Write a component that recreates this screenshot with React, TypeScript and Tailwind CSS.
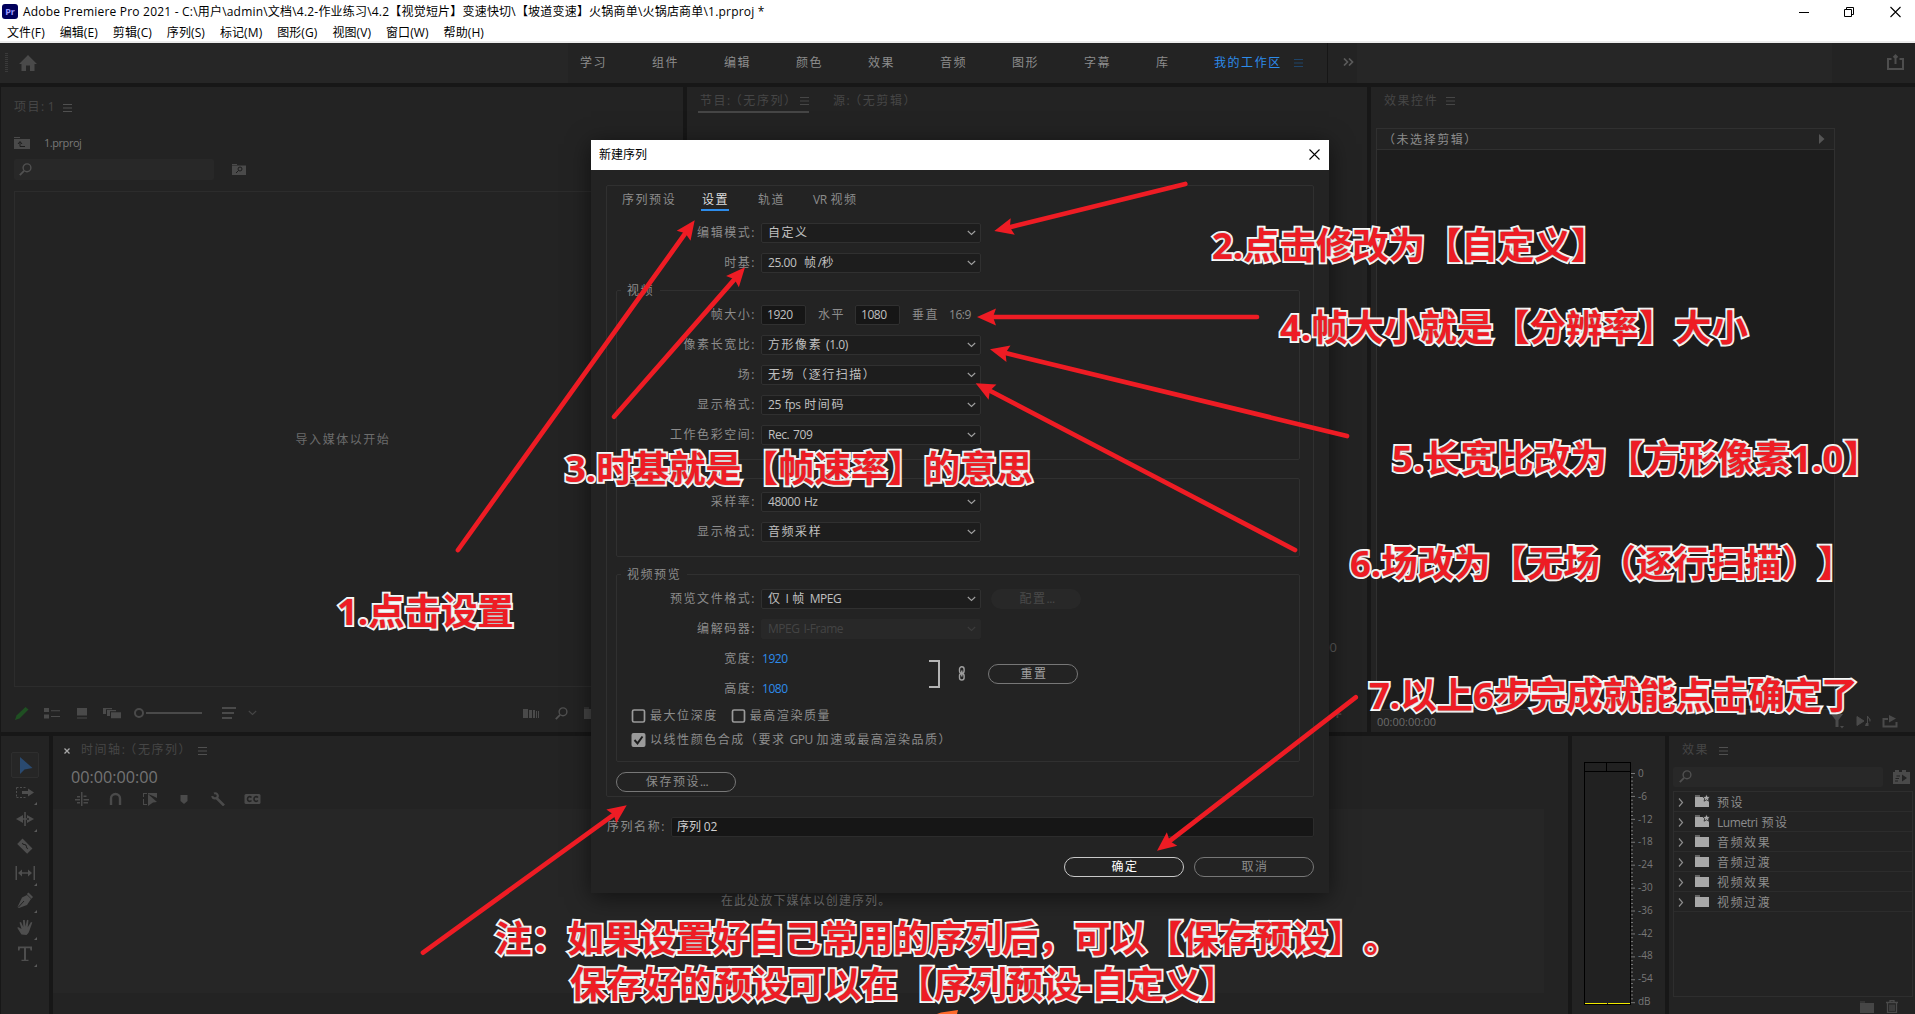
import type { ReactNode } from 'react';
import clsx from 'clsx';

const WORKSPACES = ['学习', '组件', '编辑', '颜色', '效果', '音频', '图形', '字幕', '库'];
const MENUS = ['文件(F)', '编辑(E)', '剪辑(C)', '序列(S)', '标记(M)', '图形(G)', '视图(V)', '窗口(W)', '帮助(H)'];
const DB_LABELS = ['0', '-6', '-12', '-18', '-24', '-30', '-36', '-42', '-48', '-54', 'dB'];
const EFFECTS = [
  { name: '预设', star: true },
  { name: 'Lumetri 预设', star: true },
  { name: '音频效果', star: false },
  { name: '音频过渡', star: false },
  { name: '视频效果', star: false },
  { name: '视频过渡', star: false },
];

// tail -> tip of every red arrow
const ARROWS = [
  [458, 550, 694.7, 220.3],
  [1185.3, 184, 994.3, 231],
  [614, 416.7, 745, 267.3],
  [1257, 317, 977, 317],
  [1347, 436, 990, 349.3],
  [1295, 550, 975.7, 383.3],
  [1355.7, 697.3, 1157, 850.7],
  [423, 952.7, 626.7, 805.3],
];

// Latin runs are set tighter than the spaced Chinese glyphs
function T({ children, className }: { children: string; className?: string }) {
  const runs = children.split(/([\x20-\x7e]+)/).filter(Boolean);
  return (
    <span className={clsx('whitespace-pre', className)}>
      {runs.map((r, i) =>
        /^[\x20-\x7e]/.test(r) ? (
          <span key={i} className="tracking-[-0.45px] [word-spacing:1.2px]">{r}</span>
        ) : (
          <span key={i} className="tracking-[1.55px]">{r}</span>
        )
      )}
    </span>
  );
}

function Burger({ className }: { className?: string }) {
  return (
    <svg width="9" height="8" viewBox="0 0 9 8" className={className}>
      <path d="M0 .5h9M0 4h9M0 7.5h9" stroke="currentColor" fill="none" />
    </svg>
  );
}

function Search({ className }: { className?: string }) {
  return (
    <svg width="13" height="13" viewBox="0 0 13 13" className={className} fill="none" stroke="currentColor" strokeWidth="1.4">
      <circle cx="8" cy="4.8" r="3.9" />
      <path d="M5 7.8L.8 12.2" strokeWidth="1.8" />
    </svg>
  );
}

function Chevron({ className }: { className?: string }) {
  return (
    <svg width="9" height="6" viewBox="0 0 9 6" className={className} fill="none" stroke="currentColor" strokeWidth="1.1">
      <path d="M.8 1l3.700 3.400L8.200 1" />
    </svg>
  );
}

function Folder({ star, className }: { star?: boolean; className?: string }) {
  return (
    <svg width="16" height="14" viewBox="0 0 16 14" className={className} fill="currentColor">
      <path d="M0 1.500h5v1H0zM0 3h14V13H0z" />
      {star && (
        <path d="M11.500 0l1.100 2.500 2.700.2-2 1.800.6 2.700-2.400-1.400-2.400 1.400.6-2.700-2-1.800 2.700-.2z" stroke="#232323" strokeWidth=".8" />
      )}
    </svg>
  );
}

function Select({ value, disabled }: { value: string; disabled?: boolean }) {
  return (
    <div
      className={clsx(
        'flex h-[20px] w-[220px] items-center justify-between rounded-[2px] border pl-[6px] pr-[4px]',
        disabled ? 'border-[#282828] bg-[#282828] text-[#444444]' : 'border-[#303030] bg-[#1d1d1d] text-[#c0c0c0]'
      )}
    >
      <T>{value}</T>
      <Chevron className={disabled ? 'text-[#3c3c3c]' : 'text-[#a0a0a0]'} />
    </div>
  );
}

function Row({ label, wide, children }: { label: string; wide?: boolean; children: ReactNode }) {
  return (
    <div className="flex h-[20px] items-center">
      <div className={clsx('mr-[7px] flex shrink-0 justify-end', wide ? 'w-[147px]' : 'w-[137px]')}>
        <T>{label}</T>
      </div>
      {children}
    </div>
  );
}

function Group({ title, className, children }: { title: string; className: string; children: ReactNode }) {
  return (
    <div className={clsx('relative ml-[9px] w-[684px] rounded-[2px] border border-[#303030]', className)}>
      <div className="absolute -top-[9px] left-[4px] bg-[#232323] px-[6px] leading-[18px]">
        <T>{title}</T>
      </div>
      {children}
    </div>
  );
}

function NumBox({ value }: { value: string }) {
  return (
    <div className="flex h-[20px] w-[45px] items-center rounded-[2px] border border-[#303030] bg-[#161616] pl-[5px] text-[#c0c0c0]">
      <T>{value}</T>
    </div>
  );
}

function Pill({ label, className }: { label: string; className: string }) {
  return (
    <div className={clsx('flex h-[20px] items-center justify-center rounded-full pl-[2px]', className)}>
      <T>{label}</T>
    </div>
  );
}

function Check({ label, on }: { label: string; on?: boolean }) {
  return (
    <div className="flex h-[14px] items-center gap-[4px]">
      <svg width="15" height="14" viewBox="0 0 15 14" fill="none">
        {on ? (
          <>
            <rect x=".5" width="14" height="14" rx="2" fill="#9a9a9a" />
            <path d="M3.500 7l3 3.300L11.500 3.500" stroke="#1d1d1d" strokeWidth="2" />
          </>
        ) : (
          <rect x="1.500" y="1" width="12" height="12" rx="1.500" stroke="#9a9a9a" strokeWidth="1.700" />
        )}
      </svg>
      <T>{label}</T>
    </div>
  );
}

function Dialog() {
  return (
    <div className="absolute left-[591px] top-[140px] h-[753px] w-[738px] bg-[#232323] text-[#8c8c8c] shadow-[0_4px_22px_rgba(0,0,0,0.55)]">
      <div className="flex h-[30px] items-center justify-between bg-white pl-[8px] pr-[9px] text-black">
        <span>新建序列</span>
        <svg width="11" height="11" viewBox="0 0 11 11" className="mb-[2px]" stroke="#000" strokeWidth="1.1">
          <path d="M.5.5l10 10M10.500.5l-10 10" />
        </svg>
      </div>

      <div className="ml-[15px] mt-[15px] h-[612px] w-[708px] rounded-[2px] border border-[#303030]">
        <div className="flex h-[37px] pl-[15px] leading-[26px]">
          <T className="w-[79px] pt-px">序列预设</T>
          <div className="mr-[29px] flex h-[25px] w-[28px] justify-center border-b-2 border-[#2d8ceb] pl-px text-[#dcdcdc]">
            <T className="pt-px">设置</T>
          </div>
          <T className="w-[55px] pt-px">轨道</T>
          <T className="pt-px">VR 视频</T>
        </div>
        <div className="flex flex-col gap-[10px]">
          <Row wide label="编辑模式:"><Select value="自定义" /></Row>
          <Row wide label="时基:"><Select value="25.00  帧/秒" /></Row>
        </div>

        <Group title="视频" className="mt-[17px] flex h-[170px] flex-col gap-[10px] pt-[14px]">
          <Row label="帧大小:">
            <NumBox value="1920" />
            <T className="ml-[12px] w-[37px]">水平</T>
            <NumBox value="1080" />
            <T className="ml-[12px] w-[37px]">垂直</T>
            <T>16:9</T>
          </Row>
          <Row label="像素长宽比:"><Select value="方形像素 (1.0)" /></Row>
          <Row label="场:"><Select value="无场（逐行扫描）" /></Row>
          <Row label="显示格式:"><Select value="25 fps 时间码" /></Row>
          <Row label="工作色彩空间:"><Select value="Rec. 709" /></Row>
        </Group>

        <Group title="音频" className="mt-[18px] flex h-[79px] flex-col gap-[10px] pt-[13px]">
          <Row label="采样率:"><Select value="48000 Hz" /></Row>
          <Row label="显示格式:"><Select value="音频采样" /></Row>
        </Group>

        <Group title="视频预览" className="mt-[17px] h-[188px] pt-[14px]">
          <div className="flex flex-col gap-[10px]">
            <Row label="预览文件格式:">
              <Select value="仅 I 帧 MPEG" />
              <Pill label="配置..." className="ml-[10px] w-[90px] bg-[#282828] text-[#4a4a4a]" />
            </Row>
            <Row label="编解码器:"><Select disabled value="MPEG I-Frame" /></Row>
          </div>
          <div className="mt-[10px] flex items-center">
            <div className="flex w-[312px] flex-col gap-[10px]">
              <Row label="宽度:"><T className="pl-px text-[#2d8ceb]">1920</T></Row>
              <Row label="高度:"><T className="pl-px text-[#2d8ceb]">1080</T></Row>
            </div>
            <svg width="11" height="28" viewBox="0 0 11 28" fill="none" stroke="#b4b4b4" strokeWidth="2">
              <path d="M0 1h10v26H0" />
            </svg>
            <svg width="8" height="15" viewBox="0 0 8 15" className="mb-[2px] ml-[18px]" fill="none" stroke="#a0a0a0" strokeWidth="1.4">
              <rect x="1.500" y=".8" width="4.600" height="6.500" rx="2.300" />
              <rect x="1.500" y="7.500" width="4.600" height="6.500" rx="2.300" />
              <path d="M3.800 4.500v6" />
            </svg>
            <Pill label="重置" className="ml-[22px] w-[90px] border border-[#777777] text-[#a0a0a0]" />
          </div>
          <div className="mt-[10px] flex gap-[13px] pl-[14px]">
            <Check label="最大位深度" />
            <Check label="最高渲染质量" />
          </div>
          <div className="mt-[10px] pl-[14px]">
            <Check on label="以线性颜色合成（要求 GPU 加速或最高渲染品质）" />
          </div>
        </Group>
        <Pill label="保存预设..." className="ml-[9px] mt-[10px] w-[120px] border border-[#777777]" />
      </div>

      <div className="ml-[15px] mt-[20px] flex h-[20px] items-center">
        <T className="w-[65px] pl-px">序列名称:</T>
        <div className="flex h-[20px] w-[643px] items-center rounded-[2px] border border-[#2c2c2c] bg-[#161616] pl-[5px] text-[#d0d0d0]">
          <span className="tracking-[-0.1px]">序列 02</span>
        </div>
      </div>
      <div className="mr-[15px] mt-[20px] flex justify-end gap-[10px]">
        <Pill label="确定" className="w-[120px] border-[1.5px] border-[#c8c8c8] text-white" />
        <Pill label="取消" className="w-[120px] border border-[#777777]" />
      </div>
    </div>
  );
}

const TOOLS: ReactNode[] = [
  <path d="M7 4v17l4.500-4.500L19.500 15z" fill="#2a4a70" />,
  <>
    <path d="M3.500 7.500h10M3.500 17.500h10M3.500 7.500v10" stroke="currentColor" strokeDasharray="2 1.500" fill="none" />
    <path d="M9 11h6V8.500l6 4-6 4V14H9z" />
  </>,
  <path d="M11.200 5h1.600v14h-1.600zM10 8v8l-7-4zM14 8v8l7-4zM8 11.200h8v1.600H8z" />,
  <g transform="rotate(45 12 12)">
    <path d="M5 8.500h14v7.500H5z" />
    <path d="M8 12h2l1-1h2l1 1h2" stroke="#232323" fill="none" />
  </g>,
  <path d="M2.500 5H4v14H2.500zM20.500 5H22v14h-1.500zM5 12l4-3.500v2.700h6V8.500l4 3.500-4 3.500v-2.700H9v2.700z" />,
  <>
    <path d="M14 7l4 4-4 6-8 3-1.500-1L9 9.500z" />
    <path d="M15.500 4.500L20 9l-1.500 1.800-4.700-4.700z" />
    <path d="M5.500 19l5.500-6" stroke="#232323" />
  </>,
  <path d="M8.500 19.500C7 17 5 14.500 4.200 12.500l1.500-.3L8.500 14 6.500 7.500 8 7l2.300 5L10 5h1.800l.7 6.500L14 4.800l1.500.4-.8 7L18 7l1.300.6-2.500 7c-.6 2-1.300 4-3.300 5.400z" />,
  <path d="M5 4.500h14v4h-1.500L17 6.300h-4v11.400h2.500V19h-7v-1.300H11V6.300H7L6.500 8.500H5z" />,
];

function Toolbox() {
  return (
    <div className="flex w-[48px] flex-col bg-[#232323] pt-[16px] text-[#4e4e4e]">
      {TOOLS.map((t, i) => (
        <div key={i} className="relative flex h-[27px] justify-center">
          <div className={clsx('flex h-[26px] w-[28px] items-center justify-center', i === 0 && 'rounded-[2px] border border-[#2e2e2e] bg-[#262626]')}>
            <svg width="24" height="24" viewBox="0 0 24 24" fill="currentColor" className="shrink-0">{t}</svg>
          </div>
          {i !== 0 && i !== 3 && (
            <svg width="3" height="3" viewBox="0 0 3 3" className="absolute bottom-[1px] right-[12px]">
              <path d="M3 0v3H0z" fill="#5a5a5a" />
            </svg>
          )}
        </div>
      ))}
    </div>
  );
}

function ProjectPanel() {
  return (
    <div className="flex w-[682px] flex-col bg-[#232323] pl-[13px] text-[#464646]">
      <div className="mt-[10px] flex h-[20px] items-center">
        <T className="w-[49px]">项目: 1</T>
        <Burger className="mt-[2px] text-[#505050]" />
      </div>
      <div className="mt-[16px] flex h-[20px] items-center">
        <svg width="16" height="12" viewBox="0 0 16 12">
          <path d="M0 0h6v1H0zM0 2h16v10H0z" fill="#4a4a4a" />
          <path d="M6 9.500h5M6 9.500V5M4 7l2-2.500L8 7" stroke="#1d1d1d" fill="none" />
        </svg>
        <span className="ml-[14px] text-[11px] tracking-[-0.450px] text-[#787878]">1.prproj</span>
      </div>
      <div className="mt-[6px] flex h-[21px] items-center">
        <div className="flex h-full w-[200px] items-center rounded-[2px] bg-[#282828] pl-[5px]">
          <Search className="text-[#505050]" />
        </div>
        <svg width="14" height="11" viewBox="0 0 14 11" className="ml-[18px]">
          <path d="M0 0h5v1H0zM0 1.500h14V11H0z" fill="#4a4a4a" />
          <circle cx="8" cy="5" r="2" stroke="#1d1d1d" fill="none" />
          <path d="M6.500 6.500L4 9" stroke="#1d1d1d" />
        </svg>
      </div>
      <div className="mt-[11px] flex h-[496px] w-[658px] items-center justify-center border border-[#2c2c2c] pt-[1px] text-[#6c6c6c]">
        <T>导入媒体以开始</T>
      </div>
      <div className="mt-[12px] flex h-[28px] items-center">
        <svg width="14" height="14" viewBox="0 0 14 14" className="ml-[1px]" fill="#1f4f22">
          <path d="M0 14l1.500-4.500L10.500 1 13.500 3.500 4.500 12.500zM1 13" />
        </svg>
        <svg width="17" height="11" viewBox="0 0 17 11" className="ml-[15px]" fill="#4a4a4a">
          <path d="M0 0h5v4H0zM0 6.500h5v4H0zM7 2.200h9v1H7zM7 8h9v1H7z" />
        </svg>
        <svg width="10" height="11" viewBox="0 0 10 11" className="ml-[16px]" fill="#4a4a4a">
          <path d="M0 0h10v7.500H0zM0 9.500h10v1H0z" />
        </svg>
        <svg width="18" height="11" viewBox="0 0 18 11" className="ml-[16px]" fill="#4a4a4a">
          <path d="M0 0h9v1.200H3v4.800H0zM4 2h9v1.200H7V8H4zM8 4.300h10v6H8z" />
        </svg>
        <svg width="69" height="10" viewBox="0 0 69 10" className="ml-[13px]" fill="none" stroke="#4a4a4a">
          <circle cx="5" cy="5" r="4" strokeWidth="2" />
          <path d="M12 5h56" strokeWidth="2" />
        </svg>
        <svg width="14" height="12" viewBox="0 0 14 12" className="ml-[19px]" fill="#4a4a4a">
          <path d="M0 0h14v2H0zM0 5h12v2H0zM0 10h10v2H0z" />
        </svg>
        <Chevron className="ml-[12px]" />
        <svg width="16" height="9" viewBox="0 0 16 9" className="ml-[266px]" fill="#4a4a4a">
          <path d="M0 0h5v9H0zM6 1h3v8H6zM10 1h2v8h-2zM13 2h1v7h-1zM15 2h1v7h-1z" />
        </svg>
        <Search className="ml-[16px] text-[#505050]" />
        <Folder className="ml-[16px]" />
      </div>
    </div>
  );
}

function ProgramPanel() {
  return (
    <div className="flex w-[680px] flex-col justify-between bg-[#232323] text-[#464646]">
      <div className="flex pl-[11px] pt-[3px]">
        <div className="flex h-[23px] w-[111px] items-center justify-between border-b-2 border-[#464646] pl-[2px]">
          <T>节目:（无序列）</T>
          <Burger />
        </div>
        <T className="ml-[24px] leading-[21px]">源:（无剪辑）</T>
      </div>
      <div className="flex h-[104px] flex-col items-end justify-between pb-[12px] pr-[25px] pt-[11px]">
        <span className="pr-[5px] text-[13px] text-[#5c5c5c]">00:00:00:00</span>
        <span className="text-[16px] font-bold leading-[12px]">+</span>
      </div>
    </div>
  );
}

function EffectControls() {
  return (
    <div className="flex w-[544px] flex-col bg-[#232323] pl-[5px] text-[#464646]">
      <div className="mt-[4px] flex h-[20px] items-center pl-[8px]">
        <T className="w-[62px]">效果控件</T>
        <Burger />
      </div>
      <div className="mt-[17px] flex h-[584px] w-[459px] flex-col border border-[#303030] bg-[#1d1d1d]">
        <div className="flex h-[21px] items-center justify-between border-b border-[#303030] bg-[#232323] pl-[6px] pr-[9px] text-[#8c8c8c]">
          <T className="pt-[3px]">（未选择剪辑）</T>
          <svg width="6" height="10" viewBox="0 0 6 10"><path d="M0 0l5.500 5L0 10z" fill="#555555" /></svg>
        </div>
      </div>
      <div className="flex h-[22px] items-center pl-[1px] pt-[2px] text-[11px] text-[#6c6c6c]">
        <span className="w-[454px]">00:00:00:00</span>
        <svg width="68" height="16" viewBox="0 0 68 16" className="mb-[2px]" fill="#4a4a4a">
          <path d="M0 1h12L7.500 7v7h-3V7zM9 13h4l-2 2.500z" />
          <path d="M26 3.500L33 8l-7 4.500zM36.500 3v8.500M36.500 3c0 2 3.500 2 2.500 5.500" stroke="#4a4a4a" />
          <path d="M35 10h2.500v3H34z" />
          <path d="M57 6h-4.500v7.500h13V9" fill="none" stroke="#4a4a4a" strokeWidth="2" />
          <path d="M58 2l7 3.500-7 4z" />
        </svg>
      </div>
    </div>
  );
}

function Timeline() {
  return (
    <div className="flex w-[1515px] flex-col bg-[#232323] text-[#464646]">
      <div className="mt-[4px] flex h-[20px] items-center pl-[11px]">
        <svg width="6" height="6" viewBox="0 0 6 6" className="mt-[2px]" stroke="#a8a8a8" strokeWidth="1.300"><path d="M.5.5l5 5M5.500.5l-5 5" /></svg>
        <T className="ml-[11px] w-[117px]">时间轴:（无序列）</T>
        <Burger className="mt-[2px] text-[#505050]" />
      </div>
      <div className="mt-[7px] pl-[18px] text-[16.200px] leading-[20px] text-[#747474]">00:00:00:00</div>
      <div className="flex h-[22px] items-start gap-[18px] pl-[21px] pt-[5px]">
        <svg width="16" height="14" viewBox="0 0 16 14" fill="#4a4a4a">
          <path d="M7 0h1.500v14H7zM3 4h3v1.500H3zM1 7h5v1.500H1zM3 10h3v1.500H3zM9.500 3.500h3V5h-3zM9.500 7H15v1.500H9.500zM9.500 10H14v1.500H9.500z" />
        </svg>
        <svg width="16" height="14" viewBox="0 0 16 14" fill="none" stroke="#4a4a4a" strokeWidth="2.400">
          <path d="M3 13V6.500a4.500 4.500 0 019 0V13" />
        </svg>
        <svg width="16" height="14" viewBox="0 0 16 14" fill="#4a4a4a">
          <path d="M1 1h4v1H2v3H1zM6 1h9v5l-4-2-5-2zM1 7h1v5h3v1H1zM6 2l9 8-4 .5L6 14z" />
        </svg>
        <svg width="16" height="14" viewBox="0 0 16 14" fill="#4a4a4a"><path d="M4.500 3h7v6L8 12 4.500 9z" /></svg>
        <svg width="16" height="14" viewBox="0 0 16 14" fill="none" stroke="#4a4a4a">
          <path d="M6.500 6l7.500 7.500" strokeWidth="2.600" />
          <path d="M4 1.500c2.500-1 4.500 1.500 3.500 3.500S3 7 2 4.200" strokeWidth="2.200" />
        </svg>
        <svg width="17" height="14" viewBox="0 0 17 14">
          <rect x=".5" y="2" width="16" height="10" rx="1.500" fill="#4a4a4a" />
          <path d="M7.500 5.500C6 4 3.500 4.500 3.500 7S6 10 7.500 8.500M14 5.500c-1.500-1.500-4-1-4 1.500s2.500 3 4 1.500" stroke="#232323" strokeWidth="1.600" fill="none" />
        </svg>
      </div>
      <div className="flex h-[184px] w-[1491px] bg-[#262626] pl-[668px] pt-[84px] text-[#787878]">
        <span className="tracking-[1.1px]">在此处放下媒体以创建序列。</span>
      </div>
    </div>
  );
}

function Meters() {
  return (
    <div className="flex w-[93px] bg-[#232323] pl-[12px] pt-[26px]">
      <div className="flex h-[243px] w-[47px] flex-col border border-black bg-[#212121]">
        <div className="flex h-[9px] border-b border-black">
          <div className="w-[22px] border-r border-black" />
        </div>
        <div className="flex-1" />
        <div className="flex h-[1px] gap-[1px]">
          <div className="flex-1 bg-[#f0e800]" />
          <div className="flex-1 bg-[#f0e800]" />
        </div>
      </div>
      <svg width="4" height="243" viewBox="0 0 4 243" className="text-[#787878]">
        {Array.from({ length: 61 }, (_, i) => (
          <path key={i} d={`M0 ${11.5 + i * 3.82}h${i % 6 === 0 ? 4 : 2}`} stroke="currentColor" />
        ))}
      </svg>
      <div className="ml-[3px] flex flex-col text-[10px] leading-[22.800px] text-[#787878]">
        {DB_LABELS.map((l) => (
          <span key={l} className="h-[22.800px]">{l}</span>
        ))}
      </div>
    </div>
  );
}

function EffectsPanel() {
  return (
    <div className="flex w-[246px] flex-col bg-[#232323] pl-[4px] text-[#464646]">
      <div className="mt-[4px] flex h-[20px] items-center pl-[9px]">
        <T className="w-[37px]">效果</T>
        <Burger className="mt-[2px] text-[#505050]" />
      </div>
      <div className="mt-[7px] flex h-[20px] items-center">
        <div className="flex h-full w-[210px] items-center rounded-[2px] bg-[#282828] pl-[6px]">
          <Search className="text-[#505050]" />
        </div>
        <svg width="17" height="14" viewBox="0 0 17 14" className="ml-[10px]">
          <path d="M0 2h2V0h4v2h3V0h4v2h4v12H0z" fill="#4a4a4a" />
          <path d="M9 4.500l5 3.500-5 3.500z" fill="#232323" />
          <path d="M3.500 6H7M2.500 8.500H6M2 11h3" stroke="#232323" />
        </svg>
      </div>
      <div className="mt-[4px] h-[208px] w-[240px] border border-[#2e2e2e]">
        {EFFECTS.map((e) => (
          <div key={e.name} className="flex h-[20px] items-center border-b border-[#2c2c2c] pl-[4px] text-[#8c8c8c]">
            <svg width="6" height="9" viewBox="0 0 6 9" className="mt-[2px]" fill="none" stroke="#8c8c8c" strokeWidth="1.200"><path d="M1 .5l3.500 4L1 8.500" /></svg>
            <Folder star={e.star} className="ml-[11px] mr-[6px] text-[#a8a8a8]" />
            <T className="pt-[3px]">{e.name}</T>
          </div>
        ))}
      </div>
      <div className="flex items-start gap-[10px] pl-[187px] pt-[3px]">
        <Folder />
        <svg width="12" height="13" viewBox="0 0 12 13" fill="none" stroke="#4a4a4a" strokeWidth="1.300">
          <path d="M0 2.500h12M4 2V.7h4V2M1.500 3v9.500h9V3M4 4.500V11M6 4.500V11M8 4.500V11" />
        </svg>
      </div>
    </div>
  );
}

function Note({ className, children }: { className: string; children: ReactNode }) {
  return (
    <div
      className={clsx(
        'absolute whitespace-pre font-["Open_Sans","Noto_Sans_CJK_SC",sans-serif] text-[36.400px] font-bold leading-[46px] text-[#ee1c24] [-webkit-text-stroke:4px_#fff] [paint-order:stroke_fill] [text-shadow:0_0_2px_rgba(0,0,0,0.5)]',
        className
      )}
    >
      {children}
    </div>
  );
}

function Annotations() {
  return (
    <>
      <svg width="1915" height="1014" viewBox="0 0 1915 1014" className="absolute left-0 top-0" fill="#ee1c24">
        {ARROWS.map(([x1, y1, x2, y2], i) => {
          const a = Math.atan2(y1 - y2, x1 - x2);
          return (
            <g key={i}>
              <line x1={x1} y1={y1} x2={x2 + Math.cos(a) * 15} y2={y2 + Math.sin(a) * 15} stroke="#ee1c24" strokeWidth="4.700" strokeLinecap="round" />
              <path d="M0 0L19-8.500 16 0 19 8.500z" transform={`translate(${x2} ${y2}) rotate(${(a * 180) / Math.PI})`} />
            </g>
          );
        })}
        <path d="M937 1014l4-1.500 17-2.500-1 4z" fill="#ff6a2b" />
      </svg>
      <Note className="left-[337px] top-[588px]">1.点击设置</Note>
      <Note className="left-[1212px] top-[222px]">2.点击修改为【自定义】</Note>
      <Note className="left-[565px] top-[445px]">3.时基就是【帧速率】的意思</Note>
      <Note className="left-[1280px] top-[304px]">4.帧大小就是【分辨率】大小</Note>
      <Note className="left-[1392px] top-[435px] tracking-[0.3px]">5.长宽比改为【方形像素1.0】</Note>
      <Note className="left-[1350px] top-[540px]">6.场改为【无场（逐行扫描）】</Note>
      <Note className="left-[1369px] top-[672px]">7.以上6步完成就能点击确定了</Note>
      <Note className="left-[495px] top-[915px] tracking-[-0.2px]">注：如果设置好自己常用的序列后，可以【保存预设】。</Note>
      <Note className="left-[570px] top-[961px]">保存好的预设可以在【序列预设-自定义】</Note>
    </>
  );
}

export default function App() {
  return (
    <div className='relative flex h-[1014px] w-[1915px] flex-col overflow-hidden bg-[#171717] font-["Open_Sans","Noto_Sans_CJK_SC",sans-serif] text-[12px] leading-[16px] [text-spacing-trim:space-all]'>
      <header className="h-[43px] shrink-0 border-b-2 border-[#ececec] bg-white text-black">
        <div className="flex h-[23px] items-center pl-[2px]">
          <div className="mr-[5px] flex h-[15px] w-[16px] items-center justify-center rounded-[3px] bg-[#00005b] text-[9px] font-bold text-[#9999ff]">Pr</div>
          <span className="whitespace-pre tracking-[0.2px]">Adobe Premiere Pro 2021 - C:\用户\admin\文档\4.2-作业练习\4.2【视觉短片】变速快切\【坡道变速】火锅商单\火锅店商单\1.prproj *</span>
          <svg width="103" height="12" viewBox="0 0 103 12" className="ml-auto mr-[13px]" fill="none" stroke="#000">
            <path d="M0 6.500h10" />
            <path d="M45.500 3.500h7v7h-7zM47.500 3.500v-2h7v7h-2" />
            <path d="M91.500 1l10 10M101.500 1l-10 10" strokeWidth="1.100" />
          </svg>
        </div>
        <nav className="flex h-[18px] items-center gap-[14.900px] pl-[7px] pt-[2px] tracking-[0.1px]">
          {MENUS.map((m) => <span key={m}>{m}</span>)}
        </nav>
      </header>

      <div className="flex h-[40px] shrink-0 items-stretch bg-[#232323] text-[#8c8c8c]">
        <div className="flex w-[568px] items-center bg-[#262626] pl-[5px]">
          <svg width="3" height="20" viewBox="0 0 3 20"><path d="M1.500 0v20" stroke="#3a3a3a" strokeWidth="3" strokeDasharray="1 1" /></svg>
          <svg width="18" height="16" viewBox="0 0 18 16" className="ml-[11px]" fill="#4a4a4a">
            <path d="M9 0l9 9h-2.500v7h-4.500v-5.500H7V16H2.500V9H0z" />
          </svg>
        </div>
        <div className="flex w-[760px] items-center border-r border-[#161616] pl-[12px]">
          {WORKSPACES.map((w) => (
            <T key={w} className={w === '库' ? 'w-[58px]' : 'w-[72px]'}>{w}</T>
          ))}
          <T className="w-[80px] text-[#2d8ceb]">我的工作区</T>
          <Burger className="text-[#1f4468]" />
        </div>
        <div className="flex w-[29px] items-center pl-[15px]">
          <svg width="11" height="8" viewBox="0 0 11 8" className="mb-[2px]" fill="none" stroke="#5a5a5a" strokeWidth="1.700">
            <path d="M1 .5L4.500 4 1 7.500M6 .5L9.500 4 6 7.500" />
          </svg>
        </div>
        <div className="w-[475px] bg-[#262626]" />
        <div className="flex flex-1 items-center justify-end pb-[2px] pr-[11px]">
          <svg width="17" height="16" viewBox="0 0 17 16" fill="none" stroke="#4e4e4e" strokeWidth="2">
            <path d="M4.500 5H1v10h15V5h-3.500M8.500 10V2M6.500 3.500l2-2 2 2" />
          </svg>
        </div>
      </div>

      <div className="mt-[4px] flex h-[645px] shrink-0 gap-[4px] pl-[1px]">
        <ProjectPanel />
        <ProgramPanel />
        <EffectControls />
      </div>

      <div className="mt-[4px] flex h-[278px] shrink-0 gap-[4px] pl-[1px]">
        <Toolbox />
        <Timeline />
        <Meters />
        <EffectsPanel />
      </div>

      <Dialog />
      <Annotations />
    </div>
  );
}
